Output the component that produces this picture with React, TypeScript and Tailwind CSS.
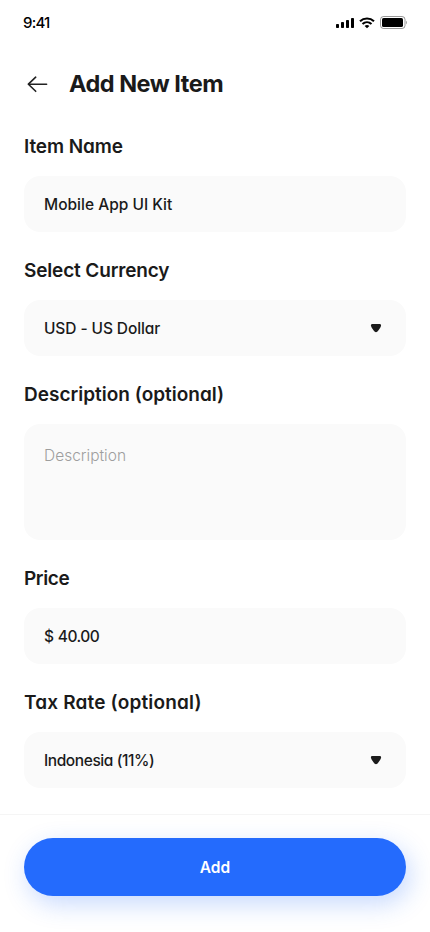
import { useState } from "react";

type FieldProps = {
  label: string;
  value: string;
  labelClass?: string;
  valueClass?: string;
  select?: boolean;
};

const ArrowLeft = () => (
  <svg width="28" height="28" viewBox="0 0 28 28" fill="none" stroke="#212121" strokeWidth="1.6" strokeLinecap="round" strokeLinejoin="round">
    <path d="M4.6 14.2H22.6" />
    <path d="M11.7 7.2L4.4 14.2L11.7 21.3" />
  </svg>
);

const Caret = () => (
  <svg width="12" height="10" viewBox="0 0 12 10" fill="#1b1b1b">
    <path d="M2.2 1H9.8C10.9 1 11.4 2.1 10.9 3.3C10.2 5.1 8.8 7.3 7.2 8.7C6.5 9.3 5.5 9.3 4.8 8.7C3.2 7.3 1.8 5.1 1.1 3.3C0.6 2.1 1.1 1 2.2 1Z" />
  </svg>
);

const StatusIcons = () => (
  <div className="mt-px flex items-center">
    <svg width="18" height="12" viewBox="0 0 18 12" fill="#000">
      <rect x="0" y="7" width="3" height="4" rx="0.8" />
      <rect x="5" y="5" width="3" height="6" rx="0.8" />
      <rect x="10" y="3" width="3" height="8" rx="0.8" />
      <rect x="15" y="1" width="3" height="10" rx="0.8" />
    </svg>
    <svg className="ml-[5px]" width="16" height="12" viewBox="0 0 16 12" fill="none" stroke="#000" strokeWidth="2.1">
      <path d="M1 4.2C5 0.5 11 0.5 15 4.2" />
      <path d="M3.5 7C6.1 4.6 9.9 4.6 12.5 7" />
      <path d="M5.6 9C7 7.8 9 7.8 10.4 9L8 11.3Z" fill="#000" stroke="none" />
    </svg>
    <svg className="ml-[5px]" width="28" height="13" viewBox="0 0 28 13" fill="none">
      <rect x="0.5" y="0.5" width="24.5" height="12" rx="3" stroke="#000" strokeOpacity="0.4" />
      <rect x="2" y="2" width="21" height="9" rx="1.6" fill="#000" />
      <path d="M26 4.8V8.4C27.2 7.8 27.2 5.4 26 4.8Z" fill="#000" fillOpacity="0.4" />
    </svg>
  </div>
);

const Field = ({ label, value, labelClass = "", valueClass = "", select }: FieldProps) => (
  <div className="flex flex-col gap-4">
    <label className={`h-7 pt-px text-[19px] leading-7 font-semibold whitespace-nowrap ${labelClass}`}>{label}</label>
    <div className="flex h-14 items-center justify-between rounded-2xl bg-[#fafafa] px-5">
      <span className={`pt-0.5 text-[15.5px] leading-6 font-medium whitespace-nowrap ${valueClass}`}>{value}</span>
      {select && (
        <span className="mr-1">
          <Caret />
        </span>
      )}
    </div>
  </div>
);

const App = () => {
  const [description, setDescription] = useState("");

  return (
    <div className="flex h-[932px] w-[430px] flex-col overflow-hidden bg-white font-['Inter',sans-serif] text-[#1a1a1a] [font-feature-settings:'cv11','ss03']">
      <div className="flex h-11 shrink-0 items-center justify-between pr-[22px] pl-[23px] text-black">
        <span className="mt-0.5 text-[15px] font-medium tracking-[-0.8px]">9:41</span>
        <StatusIcons />
      </div>

      <header className="mt-5 flex h-10 shrink-0 items-center px-6">
        <button type="button" aria-label="Back">
          <ArrowLeft />
        </button>
        <h1 className="mb-px ml-[17px] text-[23.5px] leading-8 font-bold tracking-[-0.5px]">Add New Item</h1>
      </header>

      <form className="mt-7 flex flex-col gap-6 px-6">
        <Field label="Item Name" value="Mobile App UI Kit" labelClass="tracking-[-0.1px]" />
        <Field label="Select Currency" value="USD - US Dollar" labelClass="tracking-[-0.15px]" valueClass="tracking-[-0.1px]" select />
        <div className="flex flex-col gap-4">
          <label className="h-7 pt-px text-[19px] leading-7 font-semibold">Description (optional)</label>
          <textarea
            className="h-[116px] resize-none rounded-2xl bg-[#fafafa] px-5 py-5 text-[15.5px] leading-6 font-light outline-none placeholder:text-[#9e9e9e]"
            placeholder="Description"
            value={description}
            onChange={(e) => setDescription(e.target.value)}
          />
        </div>
        <Field label="Price" value="$ 40.00" labelClass="tracking-[-0.4px]" valueClass="tracking-[-0.5px] [word-spacing:0.6px]" />
        <Field label="Tax Rate (optional)" value="Indonesia (11%)" labelClass="tracking-[0.17px]" valueClass="tracking-[-0.42px]" select />
      </form>

      <footer className="mt-[26px] border-t border-[#f5f5f5] px-6 pt-[23px]">
        <button type="button" className="h-[58px] w-full rounded-full bg-[#246bfd] pt-0.5 text-[15.5px] font-semibold text-white shadow-[4px_8px_24px_rgba(36,107,253,0.25)]">
          Add
        </button>
      </footer>
    </div>
  );
};

export default App;
